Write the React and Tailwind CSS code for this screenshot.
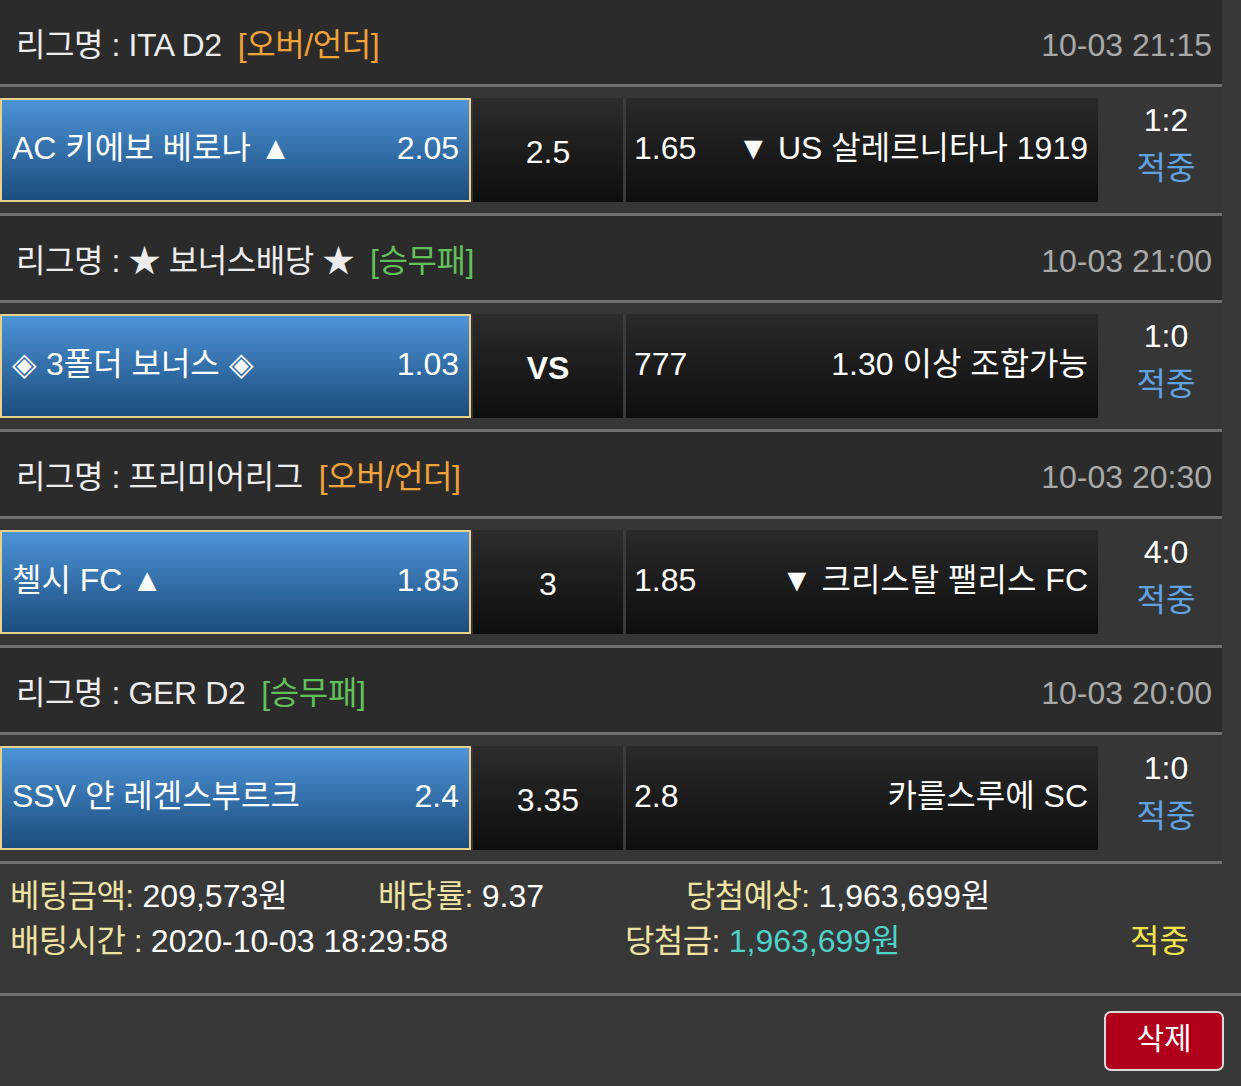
const games = [
  {
    league: "ITA D2",
    tag: "[오버/언더]",
    tagColor: "text-[#f0a23a]",
    time: "10-03 21:15",
    home: "AC 키에보 베로나 ▲",
    homeOdd: "2.05",
    mid: "2.5",
    awayOdd: "1.65",
    away: "▼ US 살레르니타나 1919",
    score: "1:2",
  },
  {
    league: "★ 보너스배당 ★",
    tag: "[승무패]",
    tagColor: "text-[#62c05a]",
    time: "10-03 21:00",
    home: "◈ 3폴더 보너스 ◈",
    homeOdd: "1.03",
    mid: "VS",
    bold: true,
    awayOdd: "777",
    away: "1.30 이상 조합가능",
    score: "1:0",
  },
  {
    league: "프리미어리그",
    tag: "[오버/언더]",
    tagColor: "text-[#f0a23a]",
    time: "10-03 20:30",
    home: "첼시 FC ▲",
    homeOdd: "1.85",
    mid: "3",
    awayOdd: "1.85",
    away: "▼ 크리스탈 팰리스 FC",
    score: "4:0",
  },
  {
    league: "GER D2",
    tag: "[승무패]",
    tagColor: "text-[#62c05a]",
    time: "10-03 20:00",
    home: "SSV 얀 레겐스부르크",
    homeOdd: "2.4",
    mid: "3.35",
    awayOdd: "2.8",
    away: "카를스루에 SC",
    score: "1:0",
  },
]

function GameBlock({ g }) {
  return (
    <div>
      <div className="h-[84px] bg-[#2b2b2b] flex items-center justify-between pl-4 pr-[10px] pt-[5px]">
        <div className="text-[#ececec] tracking-[-0.4px]">
          리그명 : {g.league}
          <span className={"ml-4 " + g.tagColor}>{g.tag}</span>
        </div>
        <div className="text-[#a9a9a9]">{g.time}</div>
      </div>
      <div className="h-[3px] bg-[#707070]" />
      <div className="h-[126px] bg-[#363636] flex items-start pt-[11px]">
        <div className="w-[471px] h-[104px] border-2 border-[#ebd088] bg-gradient-to-b from-[#4c94d8] to-[#1d4d7e] flex items-center justify-between px-[10px] pb-1 text-white">
          <span>{g.home}</span>
          <span>{g.homeOdd}</span>
        </div>
        <div
          className={
            "ml-[2px] w-[150px] h-[104px] bg-gradient-to-b from-[#2c2c2c] to-[#0e0e0e] flex items-center justify-center pt-1 text-white " +
            (g.bold ? "font-bold" : "")
          }
        >
          {g.mid}
        </div>
        <div className="w-[475px] h-[104px] border-l-[3px] border-[#3b3b3b] bg-gradient-to-b from-[#2a2a2a] to-[#0e0e0e] flex items-center justify-between pl-[8px] pr-[10px] pb-1 text-white">
          <span>{g.awayOdd}</span>
          <span>{g.away}</span>
        </div>
        <div className="flex-1 flex flex-col items-center pl-[12px] -mt-[2px] leading-[48px]">
          <span className="text-white">{g.score}</span>
          <span className="text-[#5ea3e4]">적중</span>
        </div>
      </div>
      <div className="h-[3px] bg-[#707070]" />
    </div>
  )
}

export default function App() {
  return (
    <div className="w-[1241px] h-[1086px] bg-[#383838] overflow-hidden font-['Liberation_Sans','Noto_Sans_CJK_KR',sans-serif] text-[32px] leading-none">
      <div className="w-[1222px]">
        {games.map((g, i) => (
          <GameBlock key={i} g={g} />
        ))}
      </div>
      <div className="h-[129px] pt-[10px] pl-[10px] leading-[45px] text-[32px]">
        <div className="flex">
          <span className="w-[368px]">
            <span className="text-[#efe3a2] tracking-[-0.6px]">베팅금액:</span>{" "}
            <span className="text-white">209,573원</span>
          </span>
          <span className="w-[308px]">
            <span className="text-[#efe3a2] tracking-[-0.6px]">배당률:</span>{" "}
            <span className="text-white">9.37</span>
          </span>
          <span>
            <span className="text-[#efe3a2] tracking-[-0.6px]">당첨예상:</span>{" "}
            <span className="text-white">1,963,699원</span>
          </span>
        </div>
        <div className="flex">
          <span className="w-[615px]">
            <span className="text-[#efe3a2] tracking-[-0.6px]">배팅시간 :</span>{" "}
            <span className="text-white">2020-10-03 18:29:58</span>
          </span>
          <span className="w-[505px]">
            <span className="text-[#efe3a2] tracking-[-0.6px]">당첨금:</span>{" "}
            <span className="text-[#4fd2c8]">1,963,699원</span>
          </span>
          <span className="text-[#f2e54a]">적중</span>
        </div>
      </div>
      <div className="h-[3px] bg-[#707070]" />
      <div className="flex justify-end pt-[15px] pr-[17px]">
        <button className="w-[120px] h-[60px] rounded-[7px] border-2 border-[#d9d9d9] bg-[#b0001c] text-white text-[30px] pb-1">
          삭제
        </button>
      </div>
    </div>
  )
}
